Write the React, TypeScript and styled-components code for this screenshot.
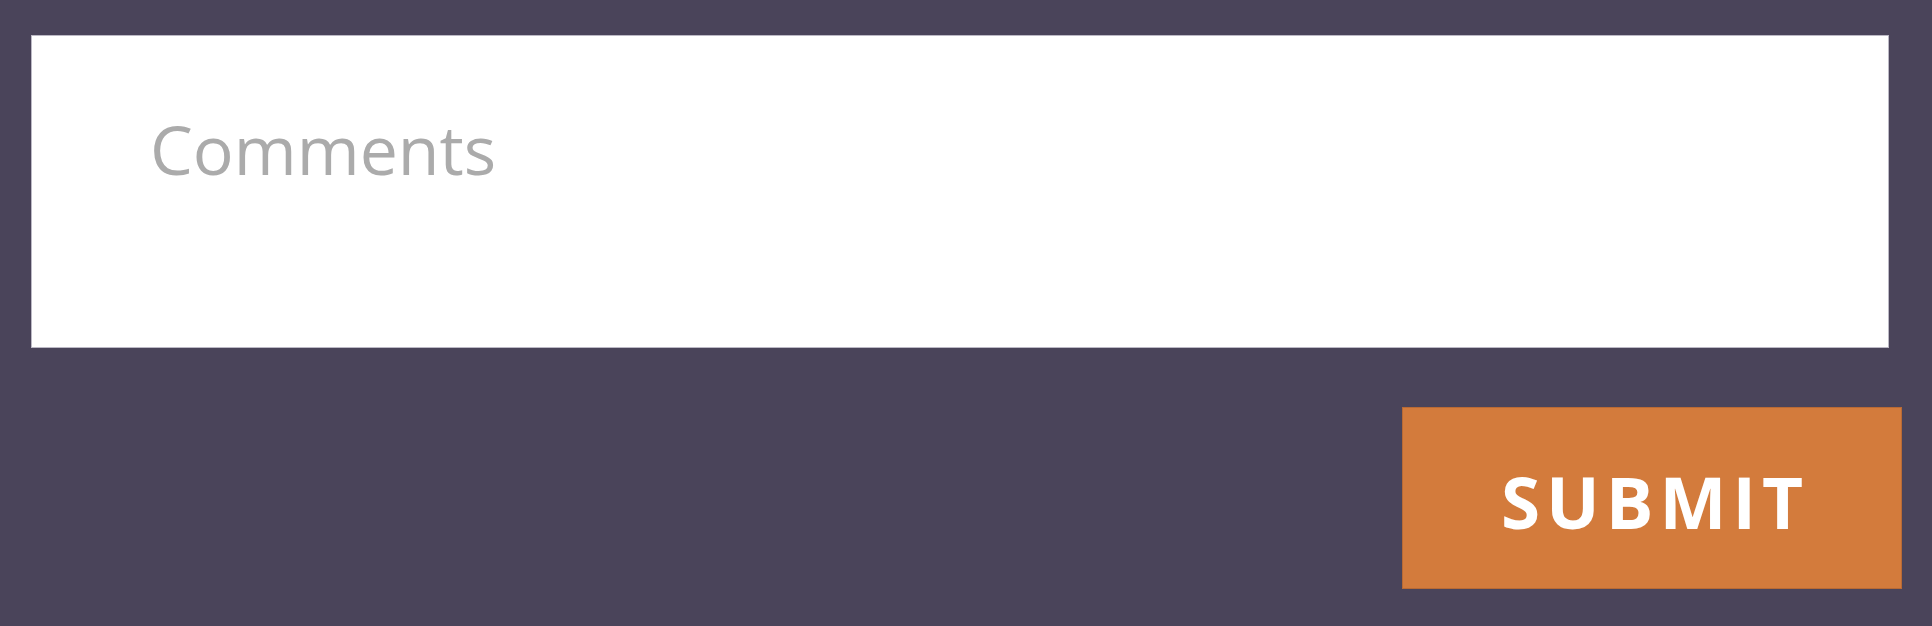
import React, { useState } from 'react'
import styled, { createGlobalStyle } from 'styled-components'

const GlobalStyle = createGlobalStyle`
  html, body {
    margin: 0;
    padding: 0;
    background: #4a445a;
    font-family: 'Open Sans', 'Liberation Sans', sans-serif;
  }
`

const CommentForm: React.FC = () => {
  const [comment, setComment] = useState('')

  return (
    <Form onSubmit={(e) => e.preventDefault()}>
      <GlobalStyle />
      <CommentBox
        placeholder="Comments"
        value={comment}
        onChange={(e) => setComment(e.target.value)}
      />
      <Actions>
        <SubmitButton type="submit">Submit</SubmitButton>
      </Actions>
    </Form>
  )
}

const Form = styled.form`
  display: flex;
  flex-direction: column;
  gap: 59px;
  padding: 35px 30px 37px 31px;
  min-height: 626px;
  box-sizing: border-box;
  background: #4a445a;
`

const CommentBox = styled.textarea`
  display: block;
  box-sizing: border-box;
  width: calc(100% - 13px);
  height: 313px;
  margin: 0;
  padding: 66px 118px 0;
  border: 1px solid #bcb9c5;
  border-radius: 0;
  background: #fff;
  resize: none;
  outline: none;
  font-family: 'Open Sans', 'Liberation Sans', sans-serif;
  font-size: 68px;
  line-height: normal;
  color: #444;
  &::placeholder {
    color: #ababab;
  }
`

const Actions = styled.div`
  display: flex;
  justify-content: flex-end;
`

const SubmitButton = styled.button`
  width: 500px;
  height: 182px;
  box-sizing: border-box;
  border: 1px solid #b86a35;
  background: #d37b3c;
  color: #fff;
  font-family: 'Open Sans', 'Liberation Sans', sans-serif;
  font-weight: 700;
  font-size: 71px;
  letter-spacing: 6px;
  text-transform: uppercase;
  padding: 6px 0 0 6px;
  cursor: pointer;
  &:hover {
    background: #dc8545;
  }
`

export default CommentForm
